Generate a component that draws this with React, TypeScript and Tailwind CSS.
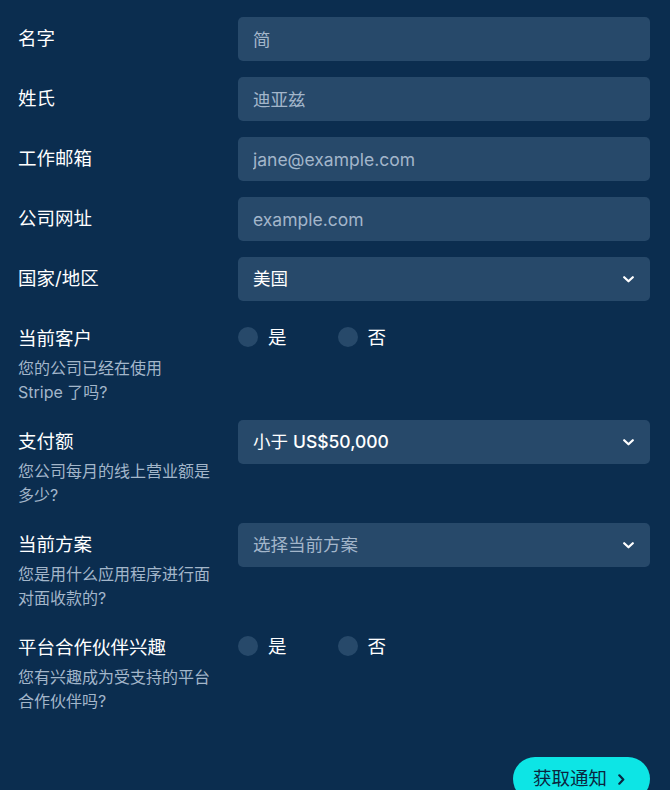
import React from "react";

const font = { fontFamily: '"Inter", "Noto Sans CJK SC", sans-serif' };

function Chevron() {
  return (
    <svg width="11" height="7" viewBox="0 0 11 7" className="shrink-0">
      <path d="M1.2 1.2l4.3 4.1 4.3-4.1" fill="none" stroke="#fff" strokeWidth="2.2" strokeLinecap="round" strokeLinejoin="round" />
    </svg>
  );
}

function Label({ title, desc }: { title: string; desc?: React.ReactNode }) {
  return (
    <div className="pt-[9px] pr-5">
      <div className="text-[18.5px] leading-6 text-white">{title}</div>
      {desc && <div className="mt-1.5 text-[16px] leading-6 text-[#a3b6ca]">{desc}</div>}
    </div>
  );
}

function TextInput({ placeholder }: { placeholder: string }) {
  return (
    <input
      placeholder={placeholder}
      className="h-11 w-full rounded-[5px] bg-[#27496a] px-[15px] text-[17.5px] text-white outline-none placeholder:text-[#a3b6ca]"
    />
  );
}

function Select({ children, muted }: { children: React.ReactNode; muted?: boolean }) {
  return (
    <div className="flex h-11 w-full items-center justify-between rounded-[5px] bg-[#27496a] pl-[15px] pr-[16px]">
      <span className={muted ? "text-[17.5px] text-[#a3b6ca]" : "text-[17.5px] text-white"}>{children}</span>
      <Chevron />
    </div>
  );
}

function Radios({ name }: { name: string }) {
  return (
    <div className="flex gap-[51px] pt-[10px]">
      {["是", "否"].map((o) => (
        <label key={o} className="flex items-center gap-[10px]">
          <input type="radio" name={name} className="sr-only" />
          <span className="h-5 w-5 rounded-full bg-[#27496a]" />
          <span className="text-[18.5px] leading-5 text-white">{o}</span>
        </label>
      ))}
    </div>
  );
}

function Row({ label, children }: { label: React.ReactNode; children: React.ReactNode }) {
  return (
    <div className="grid grid-cols-[220px_1fr] items-start">
      {label}
      <div>{children}</div>
    </div>
  );
}

export default function App() {
  return (
    <div style={font} className="min-h-screen bg-[#0b2d4f] pl-[18px] pr-5 pt-[17px]">
      <form className="flex flex-col gap-4">
        <Row label={<Label title="名字" />}>
          <TextInput placeholder="简" />
        </Row>
        <Row label={<Label title="姓氏" />}>
          <TextInput placeholder="迪亚兹" />
        </Row>
        <Row label={<Label title="工作邮箱" />}>
          <TextInput placeholder="jane@example.com" />
        </Row>
        <Row label={<Label title="公司网址" />}>
          <TextInput placeholder="example.com" />
        </Row>
        <Row label={<Label title="国家/地区" />}>
          <Select>美国</Select>
        </Row>
        <Row label={<Label title="当前客户" desc={<>您的公司已经在使用<br />Stripe 了吗?</>} />}>
          <Radios name="customer" />
        </Row>
        <Row label={<Label title="支付额" desc={<>您公司每月的线上营业额是<br />多少?</>} />}>
          <Select>
            小于 <span className="font-medium">US$50,000</span>
          </Select>
        </Row>
        <Row label={<Label title="当前方案" desc={<>您是用什么应用程序进行面<br />对面收款的?</>} />}>
          <Select muted>选择当前方案</Select>
        </Row>
        <Row label={<Label title="平台合作伙伴兴趣" desc={<>您有兴趣成为受支持的平台<br />合作伙伴吗?</>} />}>
          <Radios name="partner" />
        </Row>
      </form>
      <div className="mt-[44px] flex justify-end pb-6">
        <button className="flex h-11 items-center gap-[11px] rounded-full bg-[#0de5e5] pl-5 pr-[25px] text-[18.5px] text-[#0a2540]">
          获取通知
          <svg width="7" height="11" viewBox="0 0 7 11">
            <path d="M1.3 1.3l4 4.2-4 4.2" fill="none" stroke="#0a2540" strokeWidth="2.2" strokeLinecap="round" strokeLinejoin="round" />
          </svg>
        </button>
      </div>
    </div>
  );
}
